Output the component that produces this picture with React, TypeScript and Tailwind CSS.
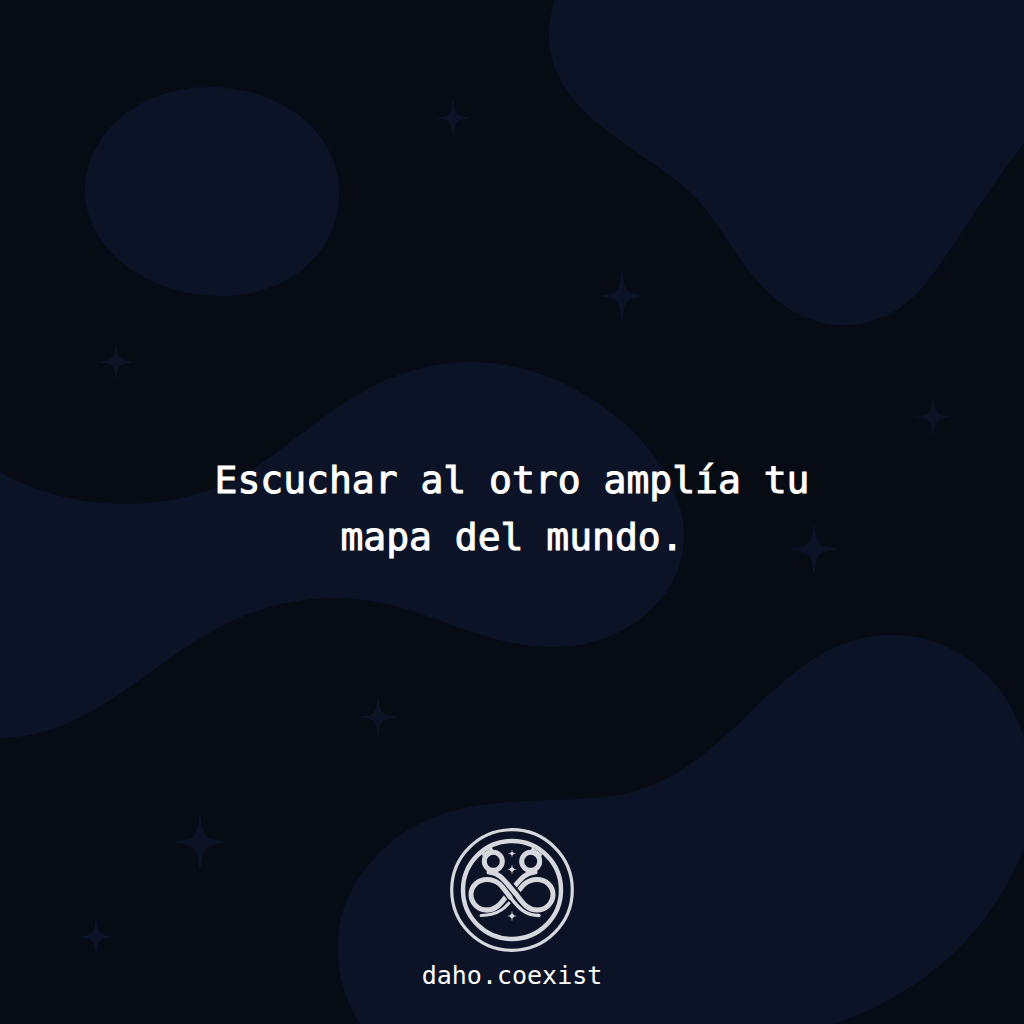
const stars: { x: number; y: number; w: number; h: number }[] = [
  { x: 453, y: 118, w: 16, h: 19 },
  { x: 622, y: 296, w: 21, h: 24 },
  { x: 116, y: 362, w: 16, h: 18 },
  { x: 933, y: 417, w: 17, h: 19 },
  { x: 814, y: 549, w: 23, h: 24 },
  { x: 378, y: 717, w: 19, h: 19 },
  { x: 200, y: 842, w: 25, h: 27 },
  { x: 96, y: 937, w: 16, h: 18 },
];

function Star({ x, y, w, h }: { x: number; y: number; w: number; h: number }) {
  return (
    <path
      transform={`translate(${x} ${y}) scale(${w} ${h})`}
      d="M0-1C.03-1 .05-.82 .07-.65C.12-.28 .3-.12 .65-.07C.82-.05 1-.03 1 0C1 .03 .82 .05 .65 .07C.3 .12 .12 .28 .07 .65C.05 .82 .03 1 0 1C-.03 1-.05 .82-.07 .65C-.12 .28-.3 .12-.65 .07C-.82 .05-1 .03-1 0C-1-.03-.82-.05-.65-.07C-.3-.12-.12-.28-.07-.65C-.05-.82-.03-1 0-1Z"
    />
  );
}

function Backdrop() {
  return (
    <svg
      aria-hidden="true"
      viewBox="0 0 1024 1024"
      preserveAspectRatio="xMidYMid slice"
      className="absolute inset-0 -z-10 h-full w-full fill-[#0c1326]"
    >
      <path d="M85 191C85 133 140 87 208 87C282 87 339 132 339 193C339 252 290 296 220 296C146 296 85 248 85 191Z" />
      <path d="M555 0C540 45 554 82 586 113C619 145 665 166 696 198C724 227 738 268 778 301C820 335 874 332 910 300C939 275 972 210 1024 143V0Z" />
      <path d="M0 472C67 510 150 513 218 487C294 457 355 362 470 362C585 362 684 458 684 535C684 598 625 647 555 647C470 647 420 598 335 598C180 598 125 738 0 738Z" />
      <path d="M360 1024C330 975 330 920 360 876C425 782 530 808 620 795C740 770 775 635 893 635C958 635 1010 684 1024 739V848C990 935 920 995 834 1024Z" />
      {stars.map((s) => (
        <Star key={`${s.x}-${s.y}`} {...s} />
      ))}
    </svg>
  );
}

function Logo() {
  return (
    <svg viewBox="0 0 140 140" className="h-[140px] w-[140px]" role="img" aria-label="daho.coexist">
      <g fill="none" stroke="#d6d8dd" strokeLinecap="round">
        <circle cx="70" cy="70" r="60.3" strokeWidth="3.2" />
        <circle cx="70" cy="70" r="49" strokeWidth="4.4" />
        <circle cx="51.3" cy="41.3" r="9" strokeWidth="5" />
        <circle cx="88.7" cy="41.3" r="9" strokeWidth="5" />
        {/* strands that rise to the right, passing underneath */}
        <path strokeWidth="5" d="M93 52C82 53 78 60 66 74C60 82 55 90 45 90" />
        <path strokeWidth="5" d="M95 59.500C84 59.500 80 66 72 77" />
        <path strokeWidth="3" d="M72 77C65 86 58 95.500 39 95.500" />
        <path stroke="#0c1326" strokeWidth="15" strokeLinecap="butt" d="M62 64L79 84" />
        {/* strands that fall to the right, with both loops */}
        <path strokeWidth="5" d="M47 52C58 53 62 60 74 74C80 82 85 90 95 90C104 90 111 83 111 74.500C111 66 104 59.500 95 59.500" />
        <path strokeWidth="5" d="M45 90C36 90 29 83 29 74.500C29 66 36 59.500 45 59.500C56 59.500 60 66 68 77" />
        <path strokeWidth="3.4" d="M68 77C75 86 82 95.500 97 95.500" />
      </g>
      <g fill="#d6d8dd">
        <path d="M41 38C43 34 46 31 51 30L50 27L40 34Z" />
        <path d="M99 38C97 34 94 31 89 30L90 27L100 34Z" />
        <Star x={70} y={33.500} w={4} h={4} />
        <Star x={70} y={49.500} w={5} h={5} />
        <Star x={70} y={96} w={5} h={5} />
        <circle cx="70" cy="33.500" r="1.6" />
        <circle cx="70" cy="49.500" r="2.1" />
        <circle cx="70" cy="96" r="2.1" />
      </g>
    </svg>
  );
}

export default function App() {
  return (
    <div className="relative isolate grid min-h-screen grid-rows-[1fr_auto_1fr] overflow-hidden bg-[#060b14] px-8 text-white [font-family:'DejaVu_Sans_Mono',monospace]">
      <Backdrop />
      <main className="row-start-2 -mt-1.5 flex justify-center">
        <h1 className="max-w-[640px] text-center text-[38px] leading-[57px] font-normal [-webkit-text-stroke:1px_white]">
          Escuchar al otro amplía tu mapa del mundo.
        </h1>
      </main>
      <footer className="row-start-3 flex flex-col items-center justify-end pb-8">
        <Logo />
        <p className="text-[25px] leading-8">daho.coexist</p>
      </footer>
    </div>
  );
}
